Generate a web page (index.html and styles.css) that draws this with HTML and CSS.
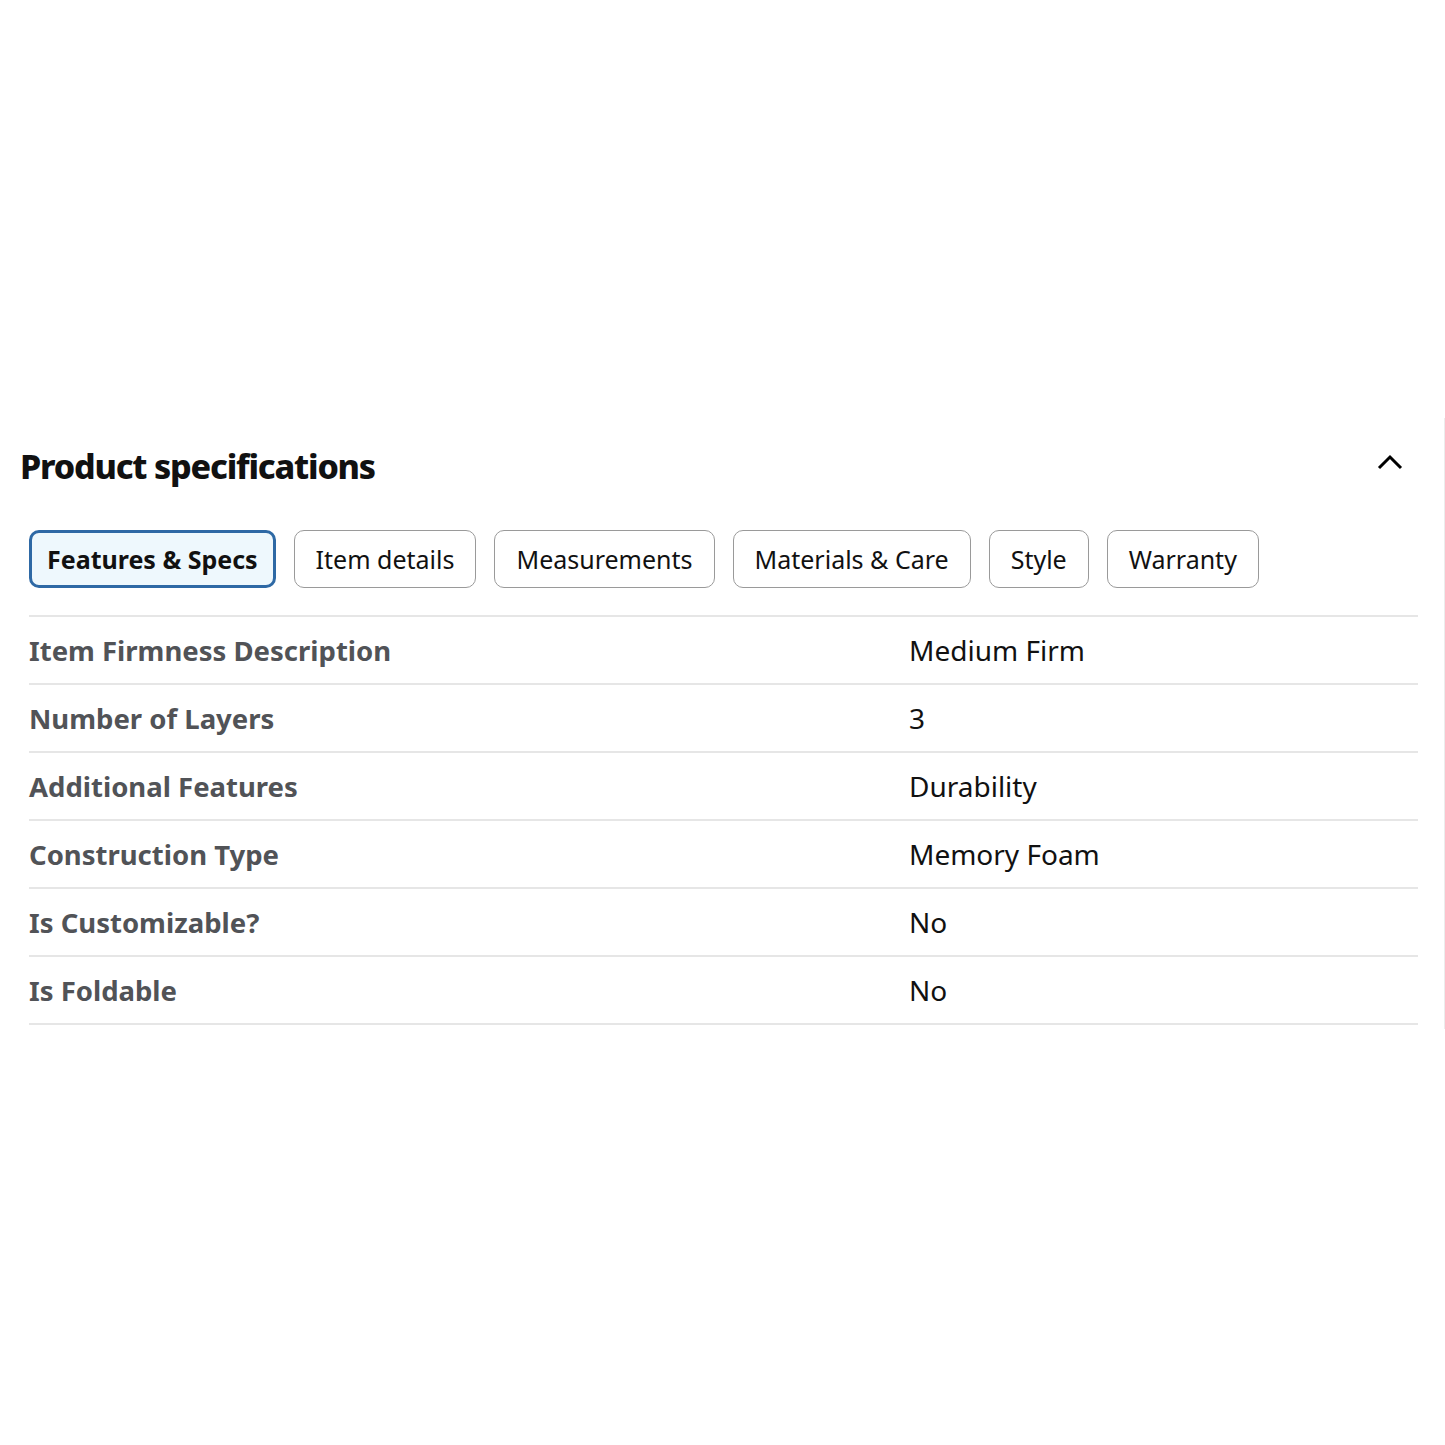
FILE: index.html
```html
<!DOCTYPE html>
<html lang="en">
<head>
    <meta charset="UTF-8">
    <meta name="viewport" content="width=device-width, initial-scale=1.0">
    <title>Product specifications</title>
    <link rel="stylesheet" href="styles.css">
</head>
<body>

<section class="specs">
    <div class="specs-header">
        <h2 class="specs-title">Product specifications</h2>
        <button class="collapse-btn" aria-label="Collapse">
            <svg width="26" height="16" viewBox="0 0 26 16">
                <path d="M2 14 L13 3 L24 14" fill="none" stroke="#000" stroke-width="3"/>
            </svg>
        </button>
    </div>

    <div class="tabs">
        <button class="tab active">Features &amp; Specs</button>
        <button class="tab">Item details</button>
        <button class="tab">Measurements</button>
        <button class="tab">Materials &amp; Care</button>
        <button class="tab">Style</button>
        <button class="tab">Warranty</button>
    </div>

    <table class="spec-table">
        <tbody>
            <tr>
                <th>Item Firmness Description</th>
                <td>Medium Firm</td>
            </tr>
            <tr>
                <th>Number of Layers</th>
                <td>3</td>
            </tr>
            <tr>
                <th>Additional Features</th>
                <td>Durability</td>
            </tr>
            <tr>
                <th>Construction Type</th>
                <td>Memory Foam</td>
            </tr>
            <tr>
                <th>Is Customizable?</th>
                <td>No</td>
            </tr>
            <tr>
                <th>Is Foldable</th>
                <td>No</td>
            </tr>
        </tbody>
    </table>
</section>

</body>
</html>
```

FILE: styles.css
```css
body {
    font-family: "Noto Sans", "Liberation Sans", sans-serif;
    background-color: #fff;
    color: #000;
    margin: 0;
}
.specs {
    margin-top: 418px;
    padding: 24px 26px 4px 20px;
    border-right: 1px solid #ececec;
}
.specs-header {
    display: flex;
    justify-content: space-between;
    align-items: center;
    height: 48px;
}
.specs-title {
    font-size: 34px;
    line-height: 48px;
    font-weight: 800;
    letter-spacing: -1.2px;
    margin: 0;
    color: #111;
}
.collapse-btn {
    background: none;
    border: none;
    padding: 0;
    margin-right: 15px;
    margin-bottom: 6px;
    cursor: pointer;
}
.tabs {
    display: flex;
    gap: 18px;
    margin: 40px 0 27px 9px;
}
.tab {
    font-family: inherit;
    font-size: 25px;
    color: #111;
    background: #fff;
    border: 1px solid #9a9a9a;
    border-radius: 10px;
    height: 58px;
    padding: 0 21px;
}
.tab.active {
    font-weight: 700;
    background: #eef8fd;
    border: 3px solid #2e69a5;
    padding: 0 15px;
}
.spec-table {
    width: calc(100% - 9px);
    margin-left: 9px;
    border-collapse: collapse;
    border-top: 2px solid #e6e6e6;
}
.spec-table th, .spec-table td {
    border-bottom: 2px solid #e6e6e6;
    height: 66px;
    padding: 0;
    text-align: left;
}
.spec-table th {
    width: 880px;
    font-size: 27.5px;
    font-weight: 700;
    color: #515357;
}
.spec-table td {
    font-size: 28px;
    color: #111;
}
```
